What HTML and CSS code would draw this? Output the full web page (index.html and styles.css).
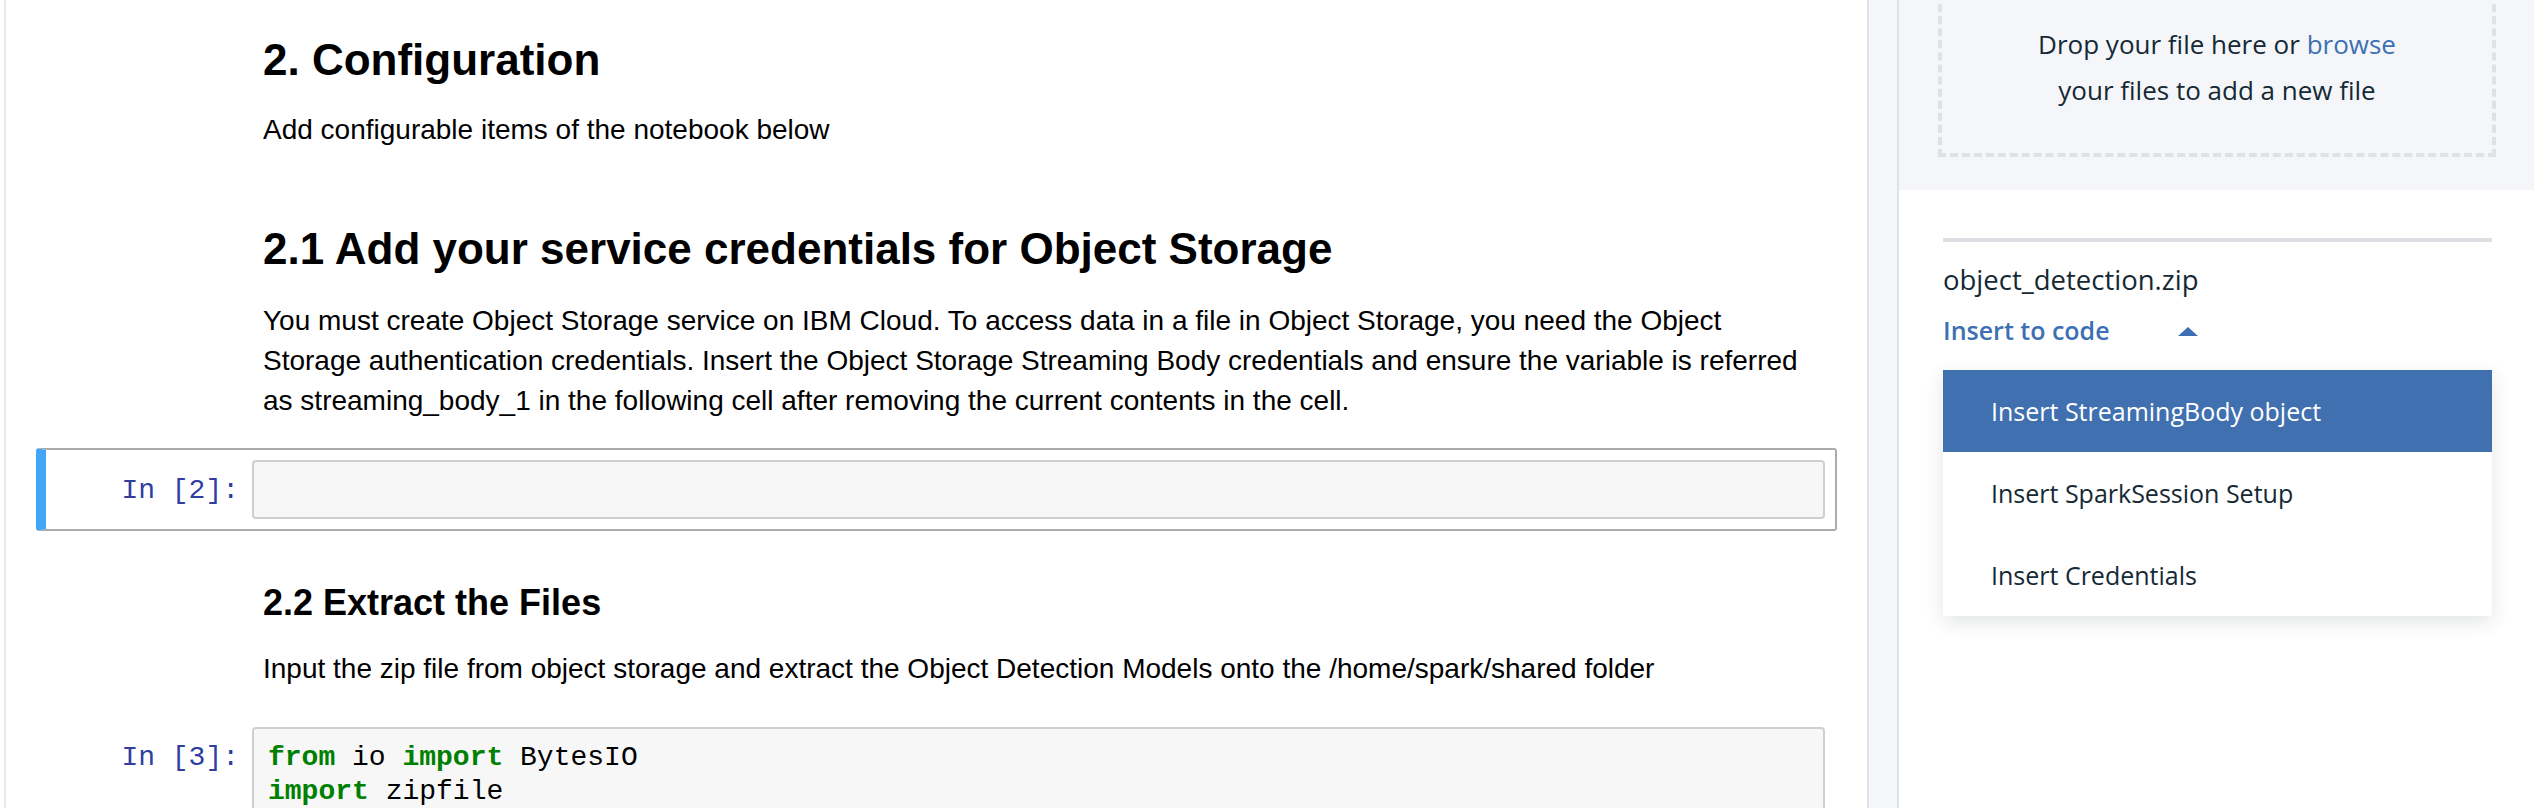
FILE: index.html
```html
<!DOCTYPE html>
<html lang="en">
<head>
<meta charset="utf-8">
<title>Notebook</title>
<link rel="stylesheet" href="styles.css">
</head>
<body>
<div class="app">
  <main class="notebook">
    <section class="cell text-cell first">
      <h2>2. Configuration</h2>
      <p>Add configurable items of the notebook below</p>
    </section>
    <section class="cell text-cell second">
      <h2>2.1 Add your service credentials for Object Storage</h2>
      <p>You must create Object Storage service on IBM Cloud. To access data in a file in Object Storage, you need the Object Storage authentication credentials. Insert the Object Storage Streaming Body credentials and ensure the variable is referred as streaming_body_1 in the following cell after removing the current contents in the cell.</p>
    </section>
    <section class="cell code-cell selected">
      <div class="prompt">In&nbsp;[2]:</div>
      <div class="input"><pre> </pre></div>
    </section>
    <section class="cell text-cell third">
      <h3>2.2 Extract the Files</h3>
      <p>Input the zip file from object storage and extract the Object Detection Models onto the /home/spark/shared folder</p>
    </section>
    <section class="cell code-cell last">
      <div class="prompt">In&nbsp;[3]:</div>
      <div class="input"><pre><span class="kw">from</span> io <span class="kw">import</span> BytesIO
<span class="kw">import</span> zipfile</pre></div>
    </section>
  </main>
  <div class="gutter"></div>
  <aside class="sidebar">
    <div class="drop-wrap">
      <div class="dropzone">
        <p>Drop your file here or <a class="link">browse</a><br>your files to add a new file</p>
      </div>
    </div>
    <div class="file">
      <div class="file-name">object_detection.zip</div>
      <div class="insert">
        <span>Insert to code</span>
        <span class="tri"></span>
      </div>
      <ul class="menu">
        <li class="active">Insert StreamingBody object</li>
        <li>Insert SparkSession Setup</li>
        <li>Insert Credentials</li>
      </ul>
    </div>
  </aside>
</div>
</body>
</html>
```

FILE: styles.css
```css
* {
  box-sizing: border-box;
  margin: 0;
  padding: 0;
}

html, body {
  background: #ffffff;
}

body {
  width: 2534px;
  height: 808px;
  overflow: hidden;
}

.app {
  display: flex;
  height: 808px;
  overflow: hidden;
}

/* ---------- notebook ---------- */
.notebook {
  flex: none;
  width: 1865px;
  margin-left: 4px;
  border-left: 2px solid #e8eaef;
  border-right: 2px solid #e0e2e7;
  padding: 0 30px;
  font-family: "Liberation Sans", Arial, sans-serif;
  font-size: 28px;
  line-height: 40px;
  color: #000;
}

.text-cell {
  padding: 0 21px 0 227px;
}

.text-cell h2 {
  font-size: 44px;
  line-height: 44px;
  font-weight: bold;
}

.text-cell h3 {
  font-size: 36px;
  line-height: 36px;
  font-weight: bold;
}

.text-cell p {
  margin-top: 28px;
}

.second p {
  margin-top: 30px;
}

.first { padding-top: 38px; }
.second { margin-top: 77px; }
.selected { margin-top: 27px; }
.third { margin-top: 54px; }
.last { margin-top: 26px; }

.code-cell {
  display: flex;
  border: 2px solid transparent;
  border-left: 10px solid transparent;
  border-radius: 3px;
  padding: 10px 10px 10px 0;
}

.code-cell.selected {
  border-color: #ababab;
  border-left-color: #42a5f5;
}

.prompt {
  flex: none;
  width: 206px;
  padding: 14px 13px 0 0;
  text-align: right;
  font-family: "Liberation Mono", "Courier New", monospace;
  font-size: 28px;
  line-height: 34px;
  color: #303f9f;
}

.input {
  flex: 1;
  background: #f7f7f7;
  border: 2px solid #cfcfcf;
  border-radius: 4px;
  padding: 12px 14px 9px;
}

.input pre {
  font-family: "Liberation Mono", "Courier New", monospace;
  font-size: 28px;
  line-height: 34px;
  color: #000;
  white-space: pre;
}

.last .input {
  min-height: 120px;
}

.kw {
  color: #008000;
  font-weight: bold;
}

/* ---------- gutter ---------- */
.gutter {
  flex: none;
  width: 30px;
  background: #f4f6fa;
  border-right: 2px solid #dfe2e6;
}

/* ---------- sidebar ---------- */
.sidebar {
  flex: 1;
  min-width: 0;
  font-family: "Open Sans", "Noto Sans", sans-serif;
  color: #152935;
  font-size: 25px;
}

.drop-wrap {
  display: flow-root;
  height: 190px;
  background: #f4f6fa;
  padding: 0 38px 0 39px;
}

.dropzone {
  height: 177px;
  margin-top: -20px;
  border: 4px dashed #dfe1e5;
  display: flex;
  align-items: center;
  justify-content: center;
  padding-bottom: 4px;
  text-align: center;
  font-size: 26px;
  line-height: 46px;
}

.link {
  color: #3d70b2;
}

.file {
  padding: 48px 42px 0 44px;
}

.file-name {
  border-top: 4px solid #dde1e6;
  padding-top: 20px;
  font-size: 27.5px;
  line-height: 36px;
}

.insert {
  display: flex;
  align-items: center;
  justify-content: space-between;
  width: 255px;
  margin-top: 14px;
  line-height: 36px;
  font-weight: 600;
  color: #3d70b2;
}

.tri {
  width: 0;
  height: 0;
  margin-top: 3px;
  border-left: 10px solid transparent;
  border-right: 10px solid transparent;
  border-bottom: 9px solid #3d70b2;
}

.menu {
  list-style: none;
  margin-top: 22px;
  background: #fff;
  box-shadow: 0 6px 18px rgba(21, 41, 53, 0.12);
}

.menu li {
  height: 82px;
  line-height: 82px;
  padding-left: 48px;
  white-space: nowrap;
}

.menu li.active {
  background: #4070b0;
  color: #ffffff;
}
```
